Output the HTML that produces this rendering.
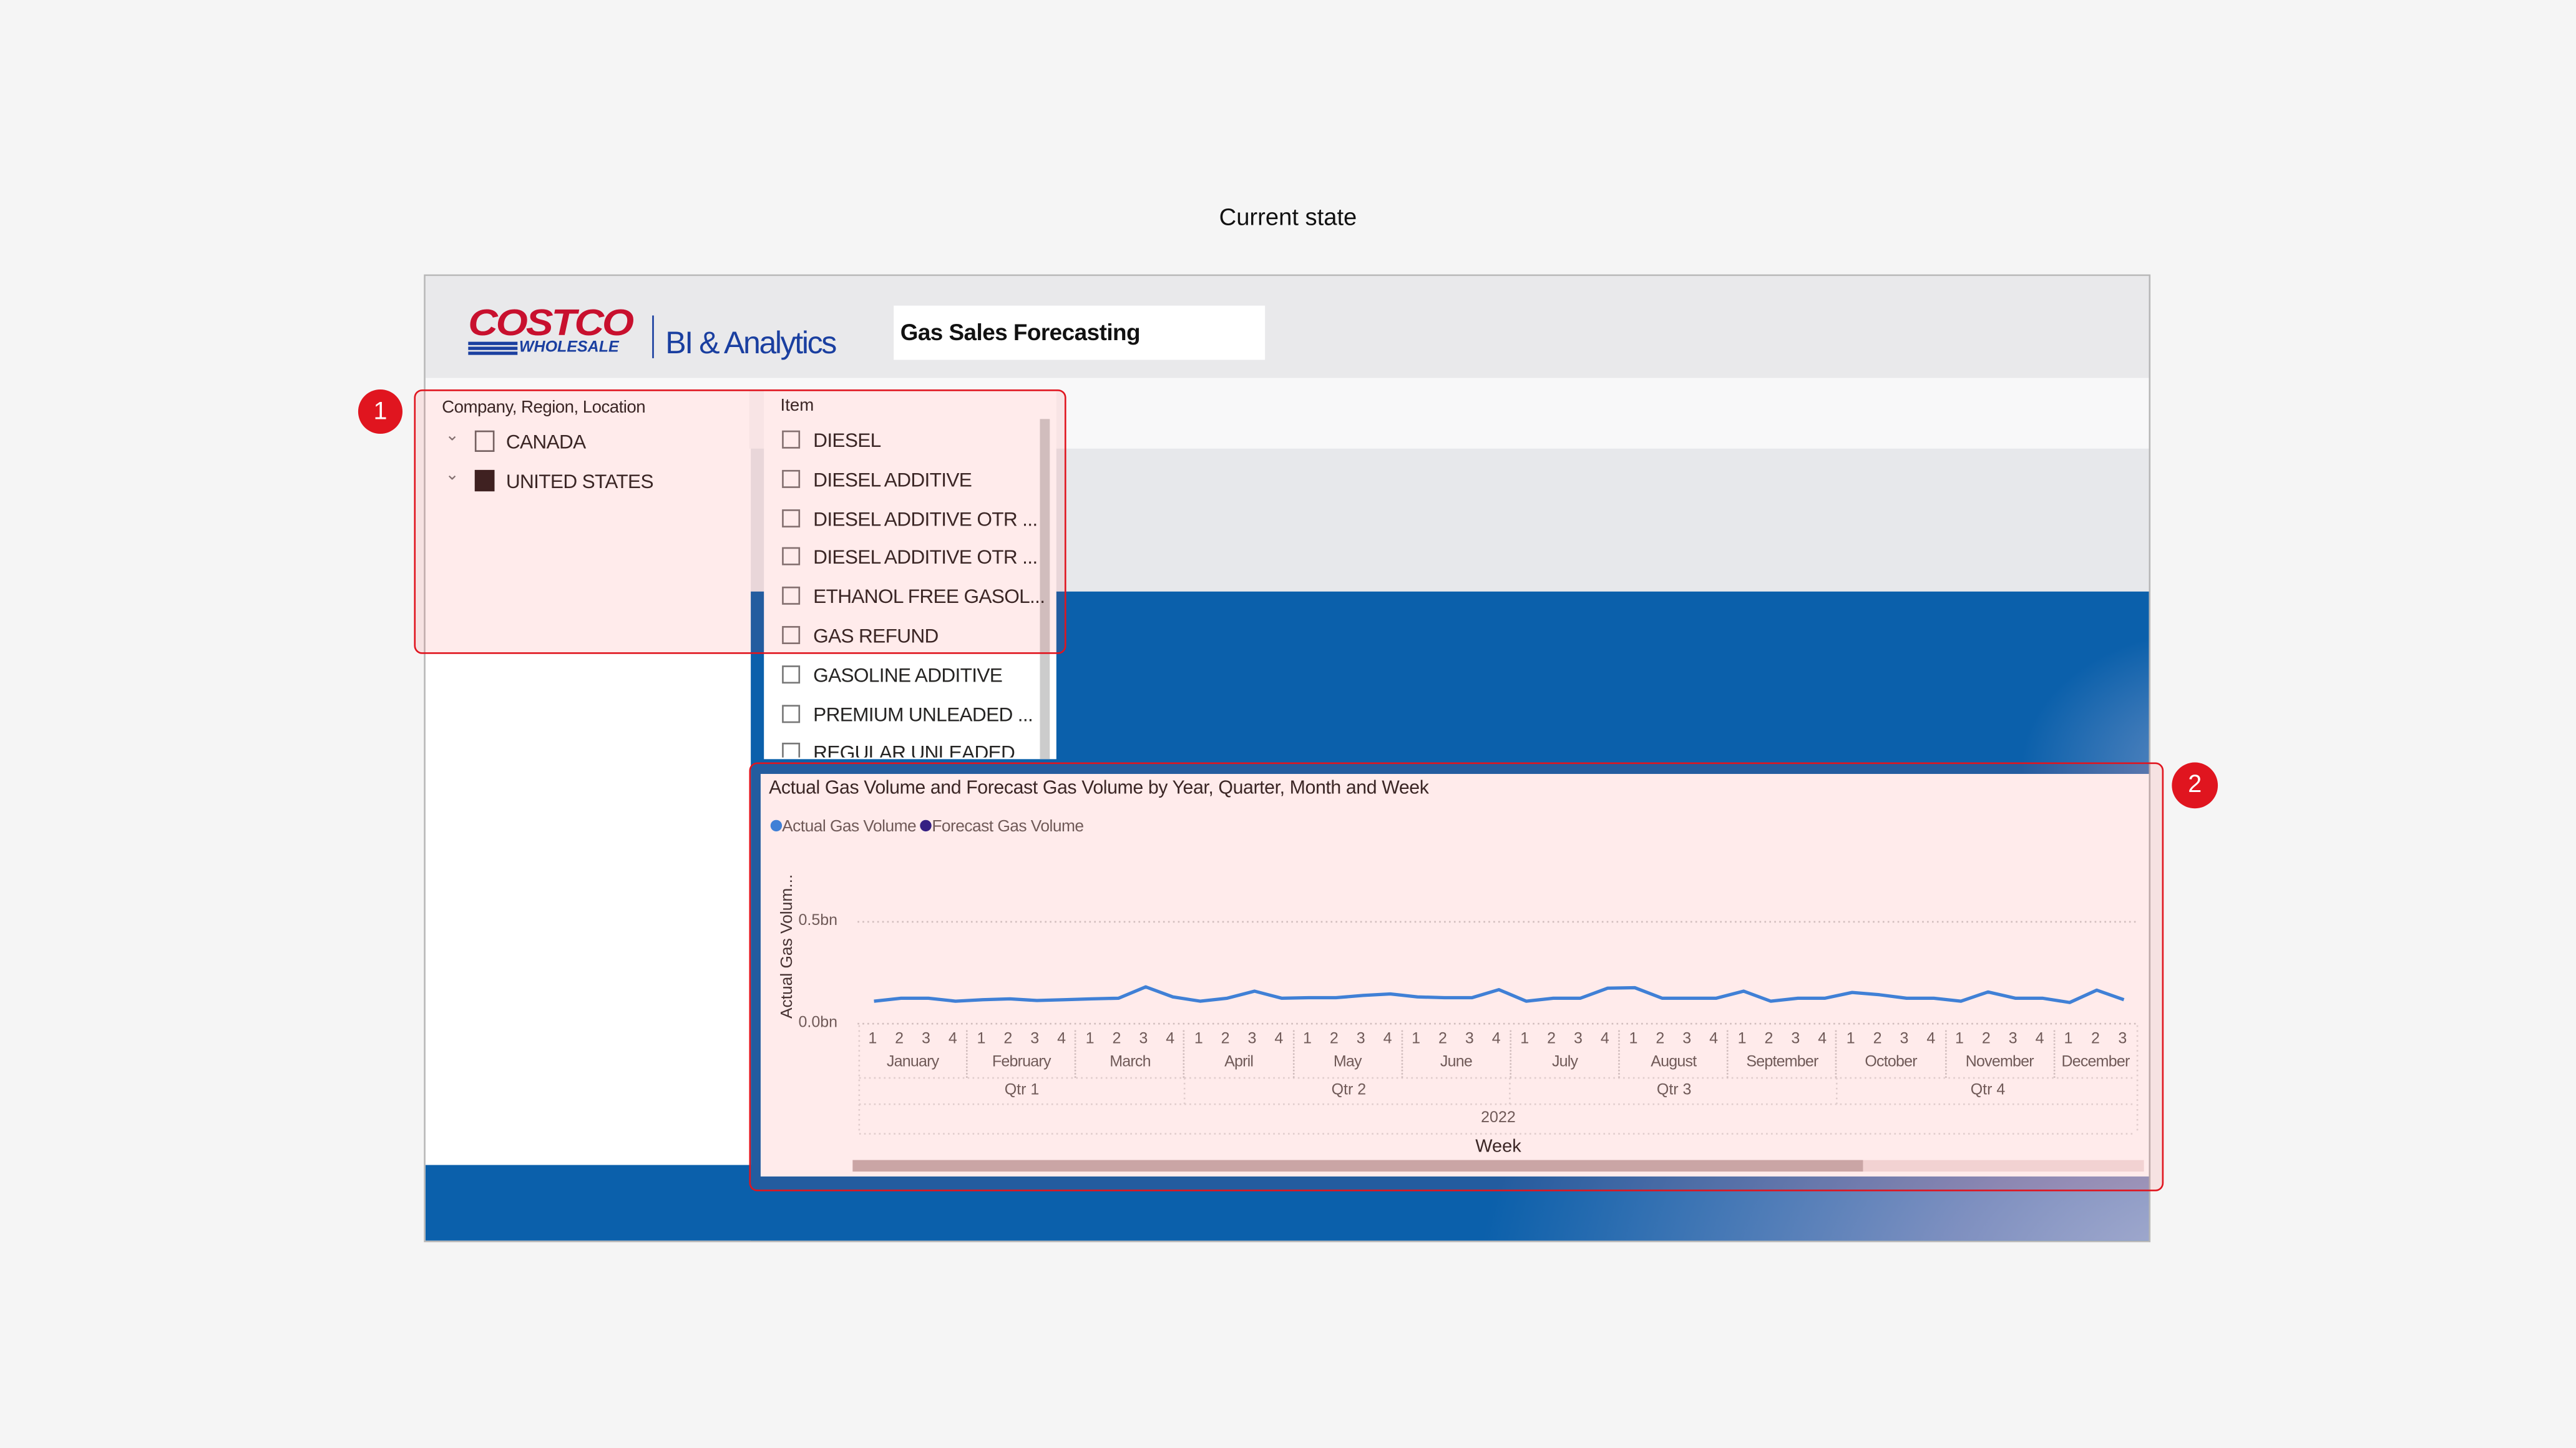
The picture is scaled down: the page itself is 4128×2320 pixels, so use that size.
<!DOCTYPE html>
<html><head><meta charset="utf-8"><style>
html,body{margin:0;padding:0;width:4128px;height:2320px;overflow:hidden;background:#f5f5f5}
#s{position:absolute;left:0;top:0;width:1568px;height:881.3px;transform:scale(2.63265);transform-origin:0 0;font-family:"Liberation Sans",sans-serif;color:#252423}
.a{position:absolute}
.cb{position:absolute;width:11px;height:11px;border:1px solid #666;box-sizing:border-box;background:#fff}
.it{position:absolute;left:476px;font-size:12px;letter-spacing:-.25px;color:#252423;white-space:nowrap}
.it span{display:inline-block;width:11px;height:11px;border:1px solid #777;box-sizing:border-box;margin-right:8px;vertical-align:-1px;background:#fff}
.wk{position:absolute;top:627px;left:523px;display:flex;font-size:9.5px;color:#605e5c}
.m{width:66.17px;box-sizing:border-box;display:flex;border-right:1px dotted #ccc;height:29px;flex-wrap:wrap;align-content:flex-start}
.m b{font-weight:normal;width:25%;text-align:center}
.m i{font-style:normal;width:100%;text-align:center;margin-top:3px;letter-spacing:-.3px;white-space:nowrap}
.m.d b{width:33.33%}
</style></head><body><div id="s">
<div class="a" style="left:0;top:125px;width:1568px;text-align:center;font-size:14.5px;color:#111">Current state</div>
<div class="a" style="left:258px;top:167px;width:1051px;height:589px;border:1px solid #b8b8b8;box-sizing:border-box;background:#fff;overflow:hidden">
 <div class="a" style="left:0;top:0;width:1051px;height:62px;background:#e9e9eb"></div>
 <div class="a" style="left:0;top:62px;width:1051px;height:43px;background:#f8f8f9"></div>
 <div class="a" style="left:198px;top:105px;width:853px;height:87px;background:#e7e8eb"></div>
 <div class="a" style="left:198px;top:192px;width:853px;height:400px;background:#0b60ab"></div>
 <div class="a" style="left:0;top:541px;width:1051px;height:50px;background:#0b60ab"></div>
 <div class="a" style="left:600px;top:300px;width:500px;height:320px;background:radial-gradient(ellipse at 100% 100%,#b2b6d4 0%,#7f90c0 25%,rgba(11,96,171,0) 65%)"></div>
 <div class="a" style="left:950px;top:200px;width:140px;height:200px;background:radial-gradient(ellipse at 100% 50%,rgba(140,160,205,.7) 0%,rgba(11,96,171,0) 60%)"></div>
</div>
<div class="a" style="left:285px;top:186px;font-weight:900;font-style:italic;font-size:25px;color:#c8102e;letter-spacing:-1.2px;transform:scaleY(.9);transform-origin:0 0;line-height:25px">COSTCO</div>
<div class="a" style="left:285px;top:208px;width:30px;height:2px;background:#1a3fa0;box-shadow:0 3px 0 #1a3fa0,0 6px 0 #1a3fa0"></div>
<div class="a" style="left:316px;top:206px;font-weight:bold;font-style:italic;font-size:9.5px;color:#1a3fa0;line-height:11px">WHOLESALE</div>
<div class="a" style="left:397px;top:192px;width:1px;height:26px;background:#1a3fa0"></div>
<div class="a" style="left:405px;top:199px;font-size:19px;color:#1a3fa0;letter-spacing:-.9px">BI &amp; Analytics</div>
<div class="a" style="left:544px;top:186px;width:226px;height:33px;background:#fff"></div>
<div class="a" style="left:548px;top:194px;font-size:14px;font-weight:bold;color:#111;letter-spacing:-.2px">Gas Sales Forecasting</div>
<div class="a" style="left:259px;top:237px;width:197px;height:160px;background:#fff"></div>
<div class="a" style="left:269px;top:242px;font-size:10.5px;letter-spacing:-.2px">Company, Region, Location</div>
<div class="a" style="left:271px;top:260px;font-size:10px;color:#777">&#8964;</div>
<div class="a" style="left:271px;top:284px;font-size:10px;color:#777">&#8964;</div>
<div class="cb" style="left:289px;top:262px;width:12px;height:13px"></div>
<div class="cb" style="left:289px;top:286px;width:12px;height:13px;background:#2a1f1f;border-color:#2a1f1f"></div>
<div class="a" style="left:308px;top:262px;font-size:12px;letter-spacing:-.25px">CANADA</div>
<div class="a" style="left:308px;top:286px;font-size:12px;letter-spacing:-.25px">UNITED STATES</div>
<div class="a" style="left:465px;top:237px;width:178px;height:225px;background:#fff;overflow:hidden">
 <div class="a" style="left:168px;top:18px;width:6px;height:207px;background:#ccc"></div>
</div>
<div class="a" style="left:475px;top:241px;font-size:10.5px">Item</div>
<div class="it" style="top:261px"><span></span>DIESEL</div>
<div class="it" style="top:285px"><span></span>DIESEL ADDITIVE</div>
<div class="it" style="top:309px"><span></span>DIESEL ADDITIVE OTR ...</div>
<div class="it" style="top:332px"><span></span>DIESEL ADDITIVE OTR ...</div>
<div class="it" style="top:356px"><span></span>ETHANOL FREE GASOL...</div>
<div class="it" style="top:380px"><span></span>GAS REFUND</div>
<div class="it" style="top:404px"><span></span>GASOLINE ADDITIVE</div>
<div class="it" style="top:428px"><span></span>PREMIUM UNLEADED ...</div>
<div class="a" style="left:465px;top:450px;width:168px;height:11px;overflow:hidden"><div class="it" style="left:11px;top:1px"><span></span>REGULAR UNLEADED</div></div>
<div class="a" style="left:252px;top:237px;width:397px;height:161px;border:1px solid #e0151f;border-radius:5px;box-sizing:border-box;background:rgba(255,60,60,.1)"></div>
<div class="a" style="left:218px;top:237px;width:27px;height:27px;border-radius:50%;background:#e0151f;color:#fff;font-size:15px;text-align:center;line-height:27px">1</div>
<div class="a" style="left:463px;top:471px;width:845px;height:245px;background:#fff"></div>
<div class="a" style="left:468px;top:474px;font-size:11.5px;letter-spacing:-.15px;color:#252423">Actual Gas Volume and Forecast Gas Volume by Year, Quarter, Month and Week</div>
<div class="a" style="left:469px;top:498px;font-size:10px;letter-spacing:-.2px;color:#605e5c"><span style="display:inline-block;width:7px;height:7px;border-radius:50%;background:#2b88e8"></span>Actual Gas Volume <span style="display:inline-block;width:7px;height:7px;border-radius:50%;background:#1f1d8c"></span>Forecast Gas Volume</div>
<div class="a" style="left:430px;top:570px;width:100px;white-space:nowrap;font-size:10px;transform:rotate(-90deg);transform-origin:50px 6px;text-align:center;color:#333">Actual Gas Volum...</div>
<div class="a" style="left:486px;top:555px;font-size:9.5px;color:#605e5c">0.5bn</div>
<div class="a" style="left:486px;top:617px;font-size:9.5px;color:#605e5c">0.0bn</div>
<svg class="a" style="left:0;top:0" width="1568" height="881" viewBox="0 0 1568 881">
 <line x1="522" y1="561" x2="1300" y2="561" stroke="#ccc" stroke-dasharray="1,2"/>
 <line x1="522" y1="623" x2="1300" y2="623" stroke="#ccc" stroke-dasharray="1,2"/>
 <line x1="523" y1="656" x2="1300" y2="656" stroke="#ddd" stroke-dasharray="1,2"/>
 <line x1="523" y1="672" x2="1300" y2="672" stroke="#ddd" stroke-dasharray="1,2"/>
 <line x1="523" y1="690" x2="1300" y2="690" stroke="#ddd" stroke-dasharray="1,2"/>
 <line x1="523" y1="624" x2="523" y2="690" stroke="#ddd" stroke-dasharray="1,2"/>
 <line x1="721" y1="656" x2="721" y2="672" stroke="#ddd" stroke-dasharray="1,2"/>
 <line x1="919" y1="656" x2="919" y2="672" stroke="#ddd" stroke-dasharray="1,2"/>
 <line x1="1118" y1="656" x2="1118" y2="672" stroke="#ddd" stroke-dasharray="1,2"/>
 <line x1="1301" y1="624" x2="1301" y2="690" stroke="#ddd" stroke-dasharray="1,2"/>
 <polyline fill="none" stroke="#2b88e8" stroke-width="2" stroke-linejoin="round" points="532,609.3 548.5,607.5 565.1,607.5 581.6,609.3 598.2,608.4 614.7,607.9 631.2,608.9 647.8,608.4 664.3,607.9 680.9,607.5 697.4,600.6 713.9,606.7 730.5,609.3 747,607.5 763.6,603.2 780.1,607.5 796.6,607.2 813.2,607.2 829.7,605.8 846.3,604.9 862.8,606.7 879.3,607.2 895.9,607.2 912.4,602.3 929,609.3 945.5,607.5 962,607.5 978.6,601.4 995.1,601.1 1011.7,607.5 1028.2,607.5 1044.7,607.5 1061.3,603.2 1077.8,609.3 1094.4,607.5 1110.9,607.5 1127.4,604 1144,605.4 1160.5,607.5 1177.1,607.5 1193.6,609.3 1210.1,603.7 1226.7,607.5 1243.2,607.5 1259.8,610.1 1276.3,602.6 1292.8,608.4"/>
</svg>
<div class="wk">
 <div class="m"><b>1</b><b>2</b><b>3</b><b>4</b><i>January</i></div>
 <div class="m"><b>1</b><b>2</b><b>3</b><b>4</b><i>February</i></div>
 <div class="m"><b>1</b><b>2</b><b>3</b><b>4</b><i>March</i></div>
 <div class="m"><b>1</b><b>2</b><b>3</b><b>4</b><i>April</i></div>
 <div class="m"><b>1</b><b>2</b><b>3</b><b>4</b><i>May</i></div>
 <div class="m"><b>1</b><b>2</b><b>3</b><b>4</b><i>June</i></div>
 <div class="m"><b>1</b><b>2</b><b>3</b><b>4</b><i>July</i></div>
 <div class="m"><b>1</b><b>2</b><b>3</b><b>4</b><i>August</i></div>
 <div class="m"><b>1</b><b>2</b><b>3</b><b>4</b><i>September</i></div>
 <div class="m"><b>1</b><b>2</b><b>3</b><b>4</b><i>October</i></div>
 <div class="m"><b>1</b><b>2</b><b>3</b><b>4</b><i>November</i></div>
 <div class="m d" style="width:49.6px;border:none"><b>1</b><b>2</b><b>3</b><i>December</i></div>
</div>
<div class="a" style="left:592px;top:658px;width:60px;text-align:center;font-size:9.5px;color:#605e5c">Qtr 1</div>
<div class="a" style="left:791px;top:658px;width:60px;text-align:center;font-size:9.5px;color:#605e5c">Qtr 2</div>
<div class="a" style="left:989px;top:658px;width:60px;text-align:center;font-size:9.5px;color:#605e5c">Qtr 3</div>
<div class="a" style="left:1180px;top:658px;width:60px;text-align:center;font-size:9.5px;color:#605e5c">Qtr 4</div>
<div class="a" style="left:882px;top:675px;width:60px;text-align:center;font-size:9.5px;color:#605e5c">2022</div>
<div class="a" style="left:882px;top:692px;width:60px;text-align:center;font-size:11px;color:#252423">Week</div>
<div class="a" style="left:519px;top:706px;width:786px;height:7px;background:#f1e4e4"></div>
<div class="a" style="left:519px;top:706px;width:615px;height:7px;background:#c4b1b1"></div>
<div class="a" style="left:456px;top:464px;width:861px;height:261px;border:1px solid #e0151f;border-radius:5px;box-sizing:border-box;background:rgba(255,60,60,.1)"></div>
<div class="a" style="left:1322px;top:464px;width:28px;height:28px;border-radius:50%;background:#e0151f;color:#fff;font-size:15px;text-align:center;line-height:28px">2</div>
</div></body></html>
